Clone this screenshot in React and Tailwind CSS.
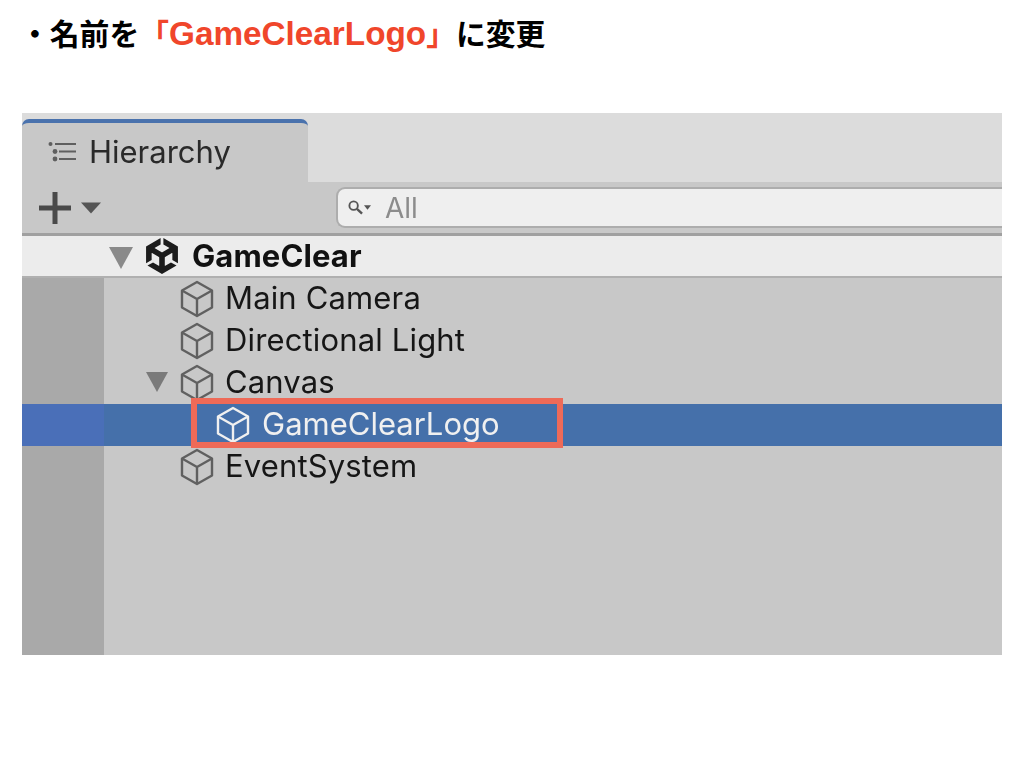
import { SiUnity } from 'react-icons/si';

const UI_FONT = 'font-["Inter","Noto_Sans",sans-serif]';

function CubeIcon({ className }) {
  return (
    <svg viewBox="0 0 36 38" fill="none" stroke="currentColor" strokeWidth="2.4" strokeLinejoin="round" className={className}>
      <path d="M18 2 L33 10.5 L33 27.5 L18 36 L3 27.5 L3 10.5 Z" />
      <path d="M3 10.5 L18 19 L33 10.5 M18 19 L18 36" />
    </svg>
  );
}

function Caret({ className }) {
  return (
    <svg viewBox="0 0 24 24" preserveAspectRatio="none" className={className} fill="currentColor">
      <path d="M0 1 L24 1 L12 23 Z" />
    </svg>
  );
}

function TreeRow({ label, caret }) {
  return (
    <div className="flex h-[42px] items-center">
      <div className="w-[82px] h-full bg-[#a9a9a9] shrink-0" />
      <div className="relative flex-1 h-full flex items-center pl-[75px]">
        {caret && <Caret className="absolute left-[42px] top-[9px] w-[22px] h-[22px] text-[#7a7a7a]" />}
        <CubeIcon className="w-[36px] h-[38px] text-[#606060]" />
        <span className={`ml-[10px] -mt-[4px] text-[31px] tracking-[0.15px] leading-none text-[#161616] ${UI_FONT}`}>{label}</span>
      </div>
    </div>
  );
}

function App() {
  return (
    <div className="w-[1024px] h-[768px] bg-white overflow-hidden relative">
      {/* Heading */}
      <h1 className='h-[113px] pt-[16px] pl-[20px] text-[29.8px] leading-[36px] font-bold text-black font-["Liberation_Sans","Noto_Sans_CJK_JP",sans-serif]'>
        ・名前を
        <span className="text-[#f0462b]">
          「<span className="text-[33.3px]">GameClearLogo</span>」
        </span>
        に変更
      </h1>

      {/* Hierarchy panel */}
      <div className="ml-[22px] w-[980px] h-[542px] bg-[#c8c8c8] flex flex-col blur-[0.5px]">
        {/* Tab strip */}
        <div className="h-[69px] bg-[#dcdcdc] pt-[6px] shrink-0">
          <div className="w-[286px] h-[63px] bg-[#c8c8c8] border-t-4 border-[#4a72ad] rounded-t-[7px] flex items-center pl-[26px]">
            <svg viewBox="0 0 28 20" className="w-[28px] h-[20px] -mt-[2px]" fill="#5f5f5f">
              <circle cx="2.5" cy="2" r="2" />
              <circle cx="7" cy="9.5" r="2.4" />
              <circle cx="7" cy="17" r="2.4" />
              <rect x="7" y="1" width="21" height="2" />
              <rect x="11" y="8.5" width="17" height="2" />
              <rect x="11" y="16" width="17" height="2" />
            </svg>
            <span className={`ml-[13px] -mt-[2px] text-[31px] leading-none text-[#2a2a2a] ${UI_FONT}`}>Hierarchy</span>
          </div>
        </div>

        {/* Toolbar */}
        <div className="h-[54px] shrink-0 relative flex items-start border-b-[3px] border-[#a0a0a0]">
          <svg viewBox="0 0 32 32" className="w-[32px] h-[32px] ml-[17px] mt-[10px]" fill="#4a4a4a">
            <rect x="0" y="13.5" width="32" height="5" />
            <rect x="13.5" y="0" width="5" height="32" />
          </svg>
          <Caret className="w-[20px] h-[12px] ml-[10px] mt-[20px] text-[#555555]" />
          <div className="ml-[235px] mt-[5px] flex-1 h-[41px] bg-[#efefef] border-2 border-r-0 border-[#adadad] rounded-l-[9px] flex items-center pl-[10px]">
            <svg viewBox="0 0 16 16" fill="none" stroke="#555555" strokeWidth="2" className="w-[15px] h-[15px]">
              <circle cx="6" cy="6" r="4.5" />
              <path d="M9.5 9.5 L15 14.5" strokeWidth="2.6" />
            </svg>
            <Caret className="w-[7px] h-[5px] ml-[1px] text-[#555555]" />
            <span className={`ml-[14px] text-[28px] leading-none text-[#8c8c8c] ${UI_FONT}`}>All</span>
          </div>
        </div>

        {/* Scene header */}
        <div className="h-[42px] shrink-0 bg-[#ececec] border-b-2 border-[#b0b0b0] flex items-center pl-[87px]">
          <Caret className="w-[24px] h-[24px] mt-[3px] text-[#8a8a8a]" />
          <SiUnity className="ml-[11px] w-[36px] h-[36px] text-[#1c1c1c]" />
          <span className={`ml-[12px] -mt-[2px] text-[31px] tracking-[0.1px] leading-none font-bold text-[#111111] ${UI_FONT}`}>GameClear</span>
        </div>

        {/* Tree */}
        <div className="flex-1 flex flex-col">
          <TreeRow label="Main Camera" />
          <TreeRow label="Directional Light" />
          <TreeRow label="Canvas" caret />
          <div className="flex h-[42px] items-center bg-[#4570aa]">
            <div className="w-[82px] h-full bg-[#4a6fb8] shrink-0" />
            <div className="flex items-center pl-[111px]">
              <CubeIcon className="w-[36px] h-[38px] text-[#f0f0f0]" />
              <span className={`ml-[11px] -mt-[4px] text-[31px] leading-none text-[#f0f0f0] ${UI_FONT}`}>GameClearLogo</span>
            </div>
          </div>
          <TreeRow label="EventSystem" />
          <div className="flex-1 flex">
            <div className="w-[82px] bg-[#a9a9a9]" />
          </div>
        </div>
      </div>

      {/* Highlight box drawn over the selected row */}
      <div className="absolute left-[191px] top-[398px] w-[372px] h-[50px] border-[6px] border-[#ee6a58]" />
    </div>
  );
}

export default App;
